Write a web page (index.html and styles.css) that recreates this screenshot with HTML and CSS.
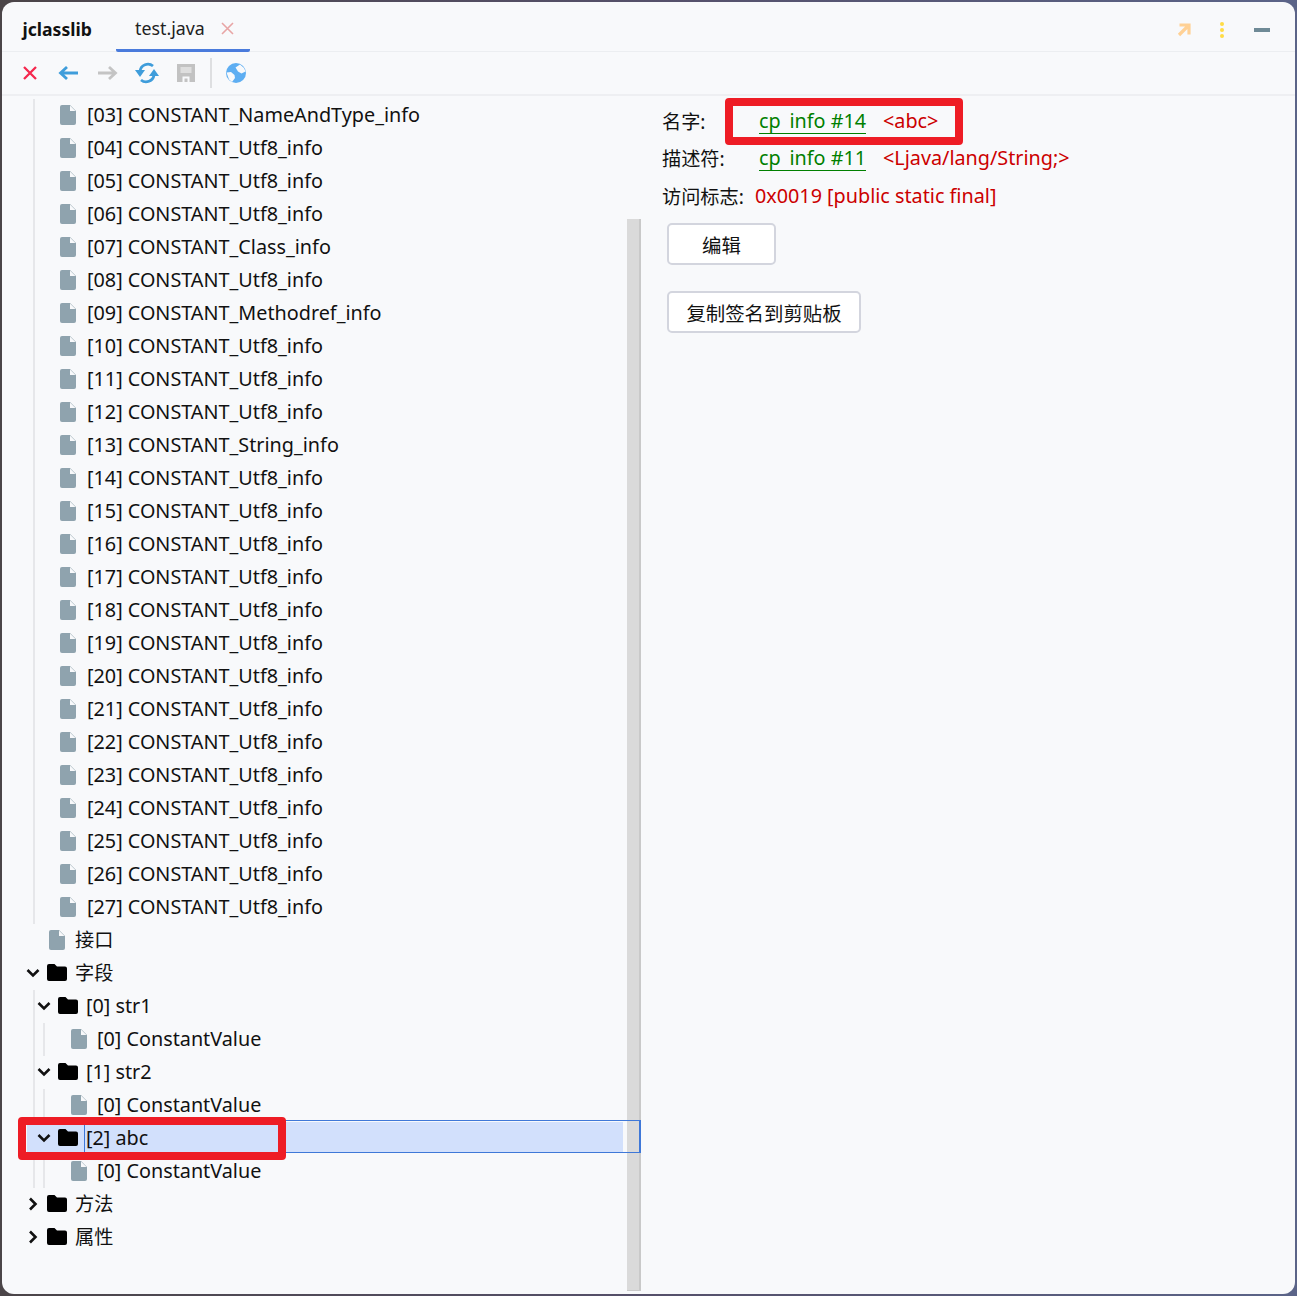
FILE: index.html
```html
<!DOCTYPE html>
<html lang="zh-CN">
<head>
<meta charset="utf-8">
<title>jclasslib</title>
<link rel="stylesheet" href="styles.css">
</head>
<body>
<svg class="defs" width="0" height="0" aria-hidden="true">
  <symbol id="file" viewBox="0 0 16 20"><path d="M2 0H10L16 6V18A2 2 0 0 1 14 20H2A2 2 0 0 1 0 18V2A2 2 0 0 1 2 0Z" fill="#8fa3ae"/><path d="M10 0.5V6H15.5Z" fill="#f8f9fb"/></symbol>
  <symbol id="folder" viewBox="0 0 20 17"><path d="M2 0H7.5L10 2.5H18A2 2 0 0 1 20 4.500V15A2 2 0 0 1 18 17H2A2 2 0 0 1 0 15V2A2 2 0 0 1 2 0Z" fill="#000"/></symbol>
  <symbol id="down" viewBox="0 0 14 10"><path d="M1.500 2L7 7.500L12.500 2" fill="none" stroke="#111" stroke-width="2.600"/></symbol>
  <symbol id="right" viewBox="0 0 10 14"><path d="M2 1.500L7.500 7L2 12.500" fill="none" stroke="#111" stroke-width="2.600"/></symbol>
</svg>
<div class="window">
  <header class="tabbar">
    <span class="brand">jclasslib</span>
    <div class="tab">
      <span>test.java</span>
      <svg class="tab-close" width="13" height="13" viewBox="0 0 13 13"><path d="M1 1L12 12M12 1L1 12" stroke="#e8a5a5" stroke-width="1.600"/></svg>
    </div>
    <div class="win-actions">
      <svg class="wa-pin" width="14" height="14" viewBox="0 0 14 14"><path d="M2.500 2H12V11.500M11 3L2 12" fill="none" stroke="#ffd195" stroke-width="3.200"/></svg>
      <svg class="wa-more" width="6" height="16" viewBox="0 0 6 16"><circle cx="3" cy="2" r="2" fill="#ffdc45"/><circle cx="3" cy="8" r="2" fill="#ffdc45"/><circle cx="3" cy="14" r="2" fill="#ffdc45"/></svg>
      <span class="wa-min"></span>
    </div>
  </header>
  <nav class="toolbar">
    <span class="tool"><svg width="16" height="16" viewBox="0 0 16 16"><path d="M2 2L14 14M14 2L2 14" stroke="#f5284e" stroke-width="2.300"/></svg></span>
    <span class="tool"><svg width="21" height="16" viewBox="0 0 21 16"><path d="M20 8H3M9 2L2.500 8L9 14" fill="none" stroke="#3f9ddb" stroke-width="2.800"/></svg></span>
    <span class="tool"><svg width="21" height="16" viewBox="0 0 21 16"><path d="M1 8H18M12 2L18.500 8L12 14" fill="none" stroke="#c4c4c4" stroke-width="2.800"/></svg></span>
    <span class="tool"><svg width="24" height="22" viewBox="0 0 24 22"><path d="M5 9A8 8 0 0 1 18 4" fill="none" stroke="#3f9ddb" stroke-width="2.800"/><path d="M19 13A8 8 0 0 1 6 18" fill="none" stroke="#3f9ddb" stroke-width="2.800"/><path d="M0 8H10L5 15Z" fill="#3f9ddb"/><path d="M14 14H24L19 7Z" fill="#3f9ddb"/></svg></span>
    <span class="tool"><svg width="18" height="18" viewBox="0 0 18 18"><rect width="18" height="18" fill="#c2c2c2"/><rect x="3.500" y="3" width="11" height="6" fill="#dedede"/><rect x="5.500" y="12.500" width="7" height="5.500" fill="#f8f9fb"/><rect x="7.500" y="14.500" width="3" height="3.500" fill="#c2c2c2"/></svg></span>
    <span class="tool-sep"></span>
    <span class="tool tool-globe"><svg width="20" height="20" viewBox="0 0 20 20"><circle cx="10" cy="10" r="10" fill="#5eaef2"/><path d="M9.500 4.500L14 1.500L18 5L19.500 8.500L15.500 10.500L12 8.500ZM0.500 9.500L5 9L8.500 12L9 15L6 19L3 16.500Z" fill="#f8f9fb"/></svg></span>
  </nav>
  <main class="main">
    <section class="tree-pane">
      <div class="group">
        <div class="row lv2"><svg class="ico-file"><use href="#file"/></svg><span class="label">[03] CONSTANT_NameAndType_info</span></div>
        <div class="row lv2"><svg class="ico-file"><use href="#file"/></svg><span class="label">[04] CONSTANT_Utf8_info</span></div>
        <div class="row lv2"><svg class="ico-file"><use href="#file"/></svg><span class="label">[05] CONSTANT_Utf8_info</span></div>
        <div class="row lv2"><svg class="ico-file"><use href="#file"/></svg><span class="label">[06] CONSTANT_Utf8_info</span></div>
        <div class="row lv2"><svg class="ico-file"><use href="#file"/></svg><span class="label">[07] CONSTANT_Class_info</span></div>
        <div class="row lv2"><svg class="ico-file"><use href="#file"/></svg><span class="label">[08] CONSTANT_Utf8_info</span></div>
        <div class="row lv2"><svg class="ico-file"><use href="#file"/></svg><span class="label">[09] CONSTANT_Methodref_info</span></div>
        <div class="row lv2"><svg class="ico-file"><use href="#file"/></svg><span class="label">[10] CONSTANT_Utf8_info</span></div>
        <div class="row lv2"><svg class="ico-file"><use href="#file"/></svg><span class="label">[11] CONSTANT_Utf8_info</span></div>
        <div class="row lv2"><svg class="ico-file"><use href="#file"/></svg><span class="label">[12] CONSTANT_Utf8_info</span></div>
        <div class="row lv2"><svg class="ico-file"><use href="#file"/></svg><span class="label">[13] CONSTANT_String_info</span></div>
        <div class="row lv2"><svg class="ico-file"><use href="#file"/></svg><span class="label">[14] CONSTANT_Utf8_info</span></div>
        <div class="row lv2"><svg class="ico-file"><use href="#file"/></svg><span class="label">[15] CONSTANT_Utf8_info</span></div>
        <div class="row lv2"><svg class="ico-file"><use href="#file"/></svg><span class="label">[16] CONSTANT_Utf8_info</span></div>
        <div class="row lv2"><svg class="ico-file"><use href="#file"/></svg><span class="label">[17] CONSTANT_Utf8_info</span></div>
        <div class="row lv2"><svg class="ico-file"><use href="#file"/></svg><span class="label">[18] CONSTANT_Utf8_info</span></div>
        <div class="row lv2"><svg class="ico-file"><use href="#file"/></svg><span class="label">[19] CONSTANT_Utf8_info</span></div>
        <div class="row lv2"><svg class="ico-file"><use href="#file"/></svg><span class="label">[20] CONSTANT_Utf8_info</span></div>
        <div class="row lv2"><svg class="ico-file"><use href="#file"/></svg><span class="label">[21] CONSTANT_Utf8_info</span></div>
        <div class="row lv2"><svg class="ico-file"><use href="#file"/></svg><span class="label">[22] CONSTANT_Utf8_info</span></div>
        <div class="row lv2"><svg class="ico-file"><use href="#file"/></svg><span class="label">[23] CONSTANT_Utf8_info</span></div>
        <div class="row lv2"><svg class="ico-file"><use href="#file"/></svg><span class="label">[24] CONSTANT_Utf8_info</span></div>
        <div class="row lv2"><svg class="ico-file"><use href="#file"/></svg><span class="label">[25] CONSTANT_Utf8_info</span></div>
        <div class="row lv2"><svg class="ico-file"><use href="#file"/></svg><span class="label">[26] CONSTANT_Utf8_info</span></div>
        <div class="row lv2"><svg class="ico-file"><use href="#file"/></svg><span class="label">[27] CONSTANT_Utf8_info</span></div>
      </div>
      <div class="row lv1"><svg class="ico-file"><use href="#file"/></svg><span class="label cn">接口</span></div>
      <div class="row fold1"><svg class="ico-down"><use href="#down"/></svg><svg class="ico-folder"><use href="#folder"/></svg><span class="label cn">字段</span></div>
      <div class="group">
        <div class="row fold2"><svg class="ico-down"><use href="#down"/></svg><svg class="ico-folder"><use href="#folder"/></svg><span class="label">[0] str1</span></div>
        <div class="group2"><div class="row lv3"><svg class="ico-file"><use href="#file"/></svg><span class="label">[0] ConstantValue</span></div></div>
        <div class="row fold2"><svg class="ico-down"><use href="#down"/></svg><svg class="ico-folder"><use href="#folder"/></svg><span class="label">[1] str2</span></div>
        <div class="group2"><div class="row lv3"><svg class="ico-file"><use href="#file"/></svg><span class="label">[0] ConstantValue</span></div></div>
        <div class="row fold2 selected"><svg class="ico-down"><use href="#down"/></svg><svg class="ico-folder"><use href="#folder"/></svg><span class="label">[2] abc</span></div>
        <div class="group2"><div class="row lv3"><svg class="ico-file"><use href="#file"/></svg><span class="label">[0] ConstantValue</span></div></div>
      </div>
      <div class="row fold1"><svg class="ico-right"><use href="#right"/></svg><svg class="ico-folder"><use href="#folder"/></svg><span class="label cn">方法</span></div>
      <div class="row fold1"><svg class="ico-right"><use href="#right"/></svg><svg class="ico-folder"><use href="#folder"/></svg><span class="label cn">属性</span></div>
      <div class="scrollbar"></div>
      <div class="mark mark-row"></div>
    </section>
    <section class="detail">
      <div class="info">
        <span class="key">名字:</span><a class="link">cp<span class="us">_</span>info #14</a><span class="val">&lt;abc&gt;</span>
        <span class="key">描述符:</span><a class="link">cp<span class="us">_</span>info #11</a><span class="val">&lt;Ljava/lang/String;&gt;</span>
      </div>
      <div class="flags"><span class="key">访问标志:</span><span class="val">0x0019 [public static final]</span></div>
      <button class="btn btn-edit">编辑</button>
      <button class="btn btn-copy">复制签名到剪贴板</button>
      <div class="mark mark-name"></div>
    </section>
  </main>
</div>
</body>
</html>
```
FILE: styles.css
```css
* { box-sizing: border-box; }
html, body { margin: 0; height: 100%; }
body {
  padding: 2px;
  height: 1296px;
  overflow: hidden;
  background: linear-gradient(90deg, #4b4548 0%, #55506a 50%, #5b6488 100%);
  font-family: "Noto Sans", "Noto Sans CJK SC", sans-serif;
  font-size: 19.8px;
  color: #111;
}
.defs { position: absolute; }
.window {
  height: 1292px;
  background: #f8f9fb;
  border-radius: 12px;
  display: flex;
  flex-direction: column;
  overflow: hidden;
}
.tabbar {
  height: 50px;
  flex: none;
  display: flex;
  align-items: stretch;
  border-bottom: 1px solid #eceef1;
  padding-left: 20px;
}
.brand {
  font-weight: 700;
  font-size: 17.6px;
  line-height: 54px;
  width: 94px;
  padding-left: 0.5px;
}
.tab {
  width: 134px;
  padding-left: 19px;
  display: flex;
  align-items: center;
  gap: 16px;
  font-size: 17.8px;
  color: #222;
  border-bottom: 3px solid #4a7bdc;
  border-radius: 0 0 2px 2px;
  height: 50px;
  padding-top: 4px;
}
.tab-close { flex: none; position: relative; top: 1px; }
.win-actions {
  margin-left: auto;
  display: flex;
  align-items: center;
  padding-top: 6px;
}
.wa-pin { margin-right: 28px; }
.wa-more { margin-right: 29px; }
.wa-min { width: 16px; height: 4px; background: #6f8a96; margin-right: 25px; }
.toolbar {
  height: 44px;
  flex: none;
  display: flex;
  align-items: center;
  border-bottom: 2px solid #eeeff2;
  padding-left: 8px;
}
.tool {
  width: 39px;
  display: flex;
  justify-content: center;
  align-items: center;
}
.tool-sep { width: 2px; height: 30px; background: #dedfe1; margin: 0 4px 0 5px; }
.main { flex: 1; display: flex; min-height: 0; }
.tree-pane {
  position: relative;
  width: 638px;
  flex: none;
  padding-top: 3px;
}
.group {
  margin-left: 31px;
  border-left: 2px solid #e6e7ea;
}
.group2 {
  margin-left: 8px;
  border-left: 2px solid #e6e7ea;
}
.row {
  height: 33px;
  display: flex;
  align-items: center;
  white-space: nowrap;
}
.label { line-height: 31px; margin-bottom: 2px; }
.cn { font-size: 19.2px; }
.ico-file { width: 16px; height: 20px; flex: none; margin-right: 11px; position: relative; top: -1px; }
.ico-folder { width: 20px; height: 17px; flex: none; margin-right: 8px; position: relative; top: -1px; }
.ico-down { width: 14px; height: 10px; flex: none; margin-right: 7px; position: relative; top: -1px; }
.ico-right { width: 10px; height: 14px; flex: none; margin-left: 2px; margin-right: 9px; position: relative; top: -1px; }
.lv1 { padding-left: 47px; }
.fold1 { padding-left: 24px; }
.lv2 { padding-left: 25px; }
.fold2 { padding-left: 2px; }
.lv3 { padding-left: 26px; }
.lv3 .ico-file { margin-right: 10px; }
.lv1 .ico-file { margin-right: 10px; }
.selected {
  position: relative;
  z-index: 1;
  width: 615px;
  margin-left: -8px;
  padding-left: 10px;
  background: linear-gradient(90deg, #d2e0fc, #d2e0fc) no-repeat 0 -1px / 596px 31px;
}
.selected::after {
  content: "";
  position: absolute;
  left: 57px;
  right: 1px;
  top: -2px;
  bottom: 2px;
  border: 1px solid #3f78d8;
  border-right-width: 2px;
}
.scrollbar {
  position: absolute;
  left: 625px;
  width: 14px;
  top: 123px;
  bottom: 3px;
  background: #dadada;
  border-right: 2px solid #c9c9c9;
  border-bottom: 1px solid #c9c9c9;
}
.mark {
  position: absolute;
  border: 8px solid #ee1c25;
  border-radius: 4px;
  z-index: 2;
}
.mark-row { left: 16px; top: 1021px; width: 268px; height: 43px; }
.detail {
  position: relative;
  flex: 1;
  padding: 3px 0 0 22px;
}
.info {
  display: grid;
  grid-template-columns: 97px 124px auto;
  justify-content: start;
  grid-auto-rows: 37px;
  align-items: center;
  padding-top: 3px;
}
.key { color: #111; font-size: 19.2px; }
.link {
  color: #008000;
  border-bottom: 1px solid #008000;
  line-height: 25px;
  justify-self: start;
}
.us { color: transparent; }
.val { color: #cc0000; }
.flags {
  height: 39px;
  display: flex;
  align-items: center;
  gap: 11px;
}
.btn {
  display: block;
  font: inherit;
  font-size: 19.4px;
  color: #111;
  background: #fff;
  border: 2px solid #d3d5de;
  border-radius: 5px;
  height: 42px;
  padding: 0;
}
.btn-edit { width: 109px; margin: 8px 0 26px 5px; }
.btn-copy { width: 194px; margin-left: 5px; }
.mark-name { left: 85px; top: 2px; width: 238px; height: 47px; }
```
